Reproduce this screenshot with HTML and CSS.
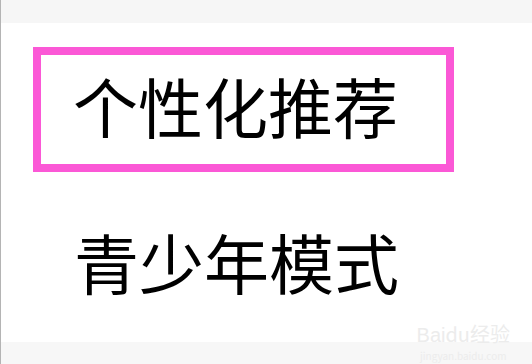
FILE: index.html
```html
<!DOCTYPE html>
<html lang="zh-CN">
<head>
  <meta charset="UTF-8">
  <meta name="viewport" content="width=device-width, initial-scale=1.0">
  <title>设置</title>
  <link rel="stylesheet" href="styles.css">
</head>
<body>

  <div class="top-bar"></div>

  <div class="menu">
    <div class="menu-item highlight">个性化推荐</div>
    <div class="menu-item">青少年模式</div>
  </div>

  <div class="bottom-bar">
    <span class="watermark">Bai<span class="paw">du</span>经验<br><small>jingyan.baidu.com</small></span>
  </div>

</body>
</html>
```

FILE: styles.css
```css
/* Estilos globales */
* {
  margin: 0;
  padding: 0;
  box-sizing: border-box;
  font-family: 'Noto Sans CJK SC', 'Noto Sans', sans-serif;
}

body {
  width: 532px;
  height: 364px;
  background: #fff;
  border-left: 1px solid #b4b4b4;
  overflow: hidden;
}

.top-bar {
  height: 23px;
  background-color: #f6f6f6;
}

.menu {
  height: 319px;
  padding: 24px 0 0 32px;
}

.menu-item {
  font-size: 65px;
  line-height: 1;
  color: #000;
  display: flex;
}

.highlight {
  width: 421px;
  height: 125px;
  border: 8px solid #fb58d6;
  padding: 0 0 8px 32px;
  align-items: center;
}

.menu-item + .menu-item {
  height: 170px;
  padding: 57px 0 0 41px;
  align-items: flex-start;
}

.bottom-bar {
  height: 22px;
  background-color: #f7f7f7;
  position: relative;
}

.watermark {
  position: absolute;
  right: 22px;
  bottom: 2px;
  color: #ececec;
  font-family: 'Liberation Sans', sans-serif;
  font-size: 20px;
  line-height: 18px;
  text-align: center;
}

.watermark small {
  font-size: 10px;
  line-height: 12px;
}
```
